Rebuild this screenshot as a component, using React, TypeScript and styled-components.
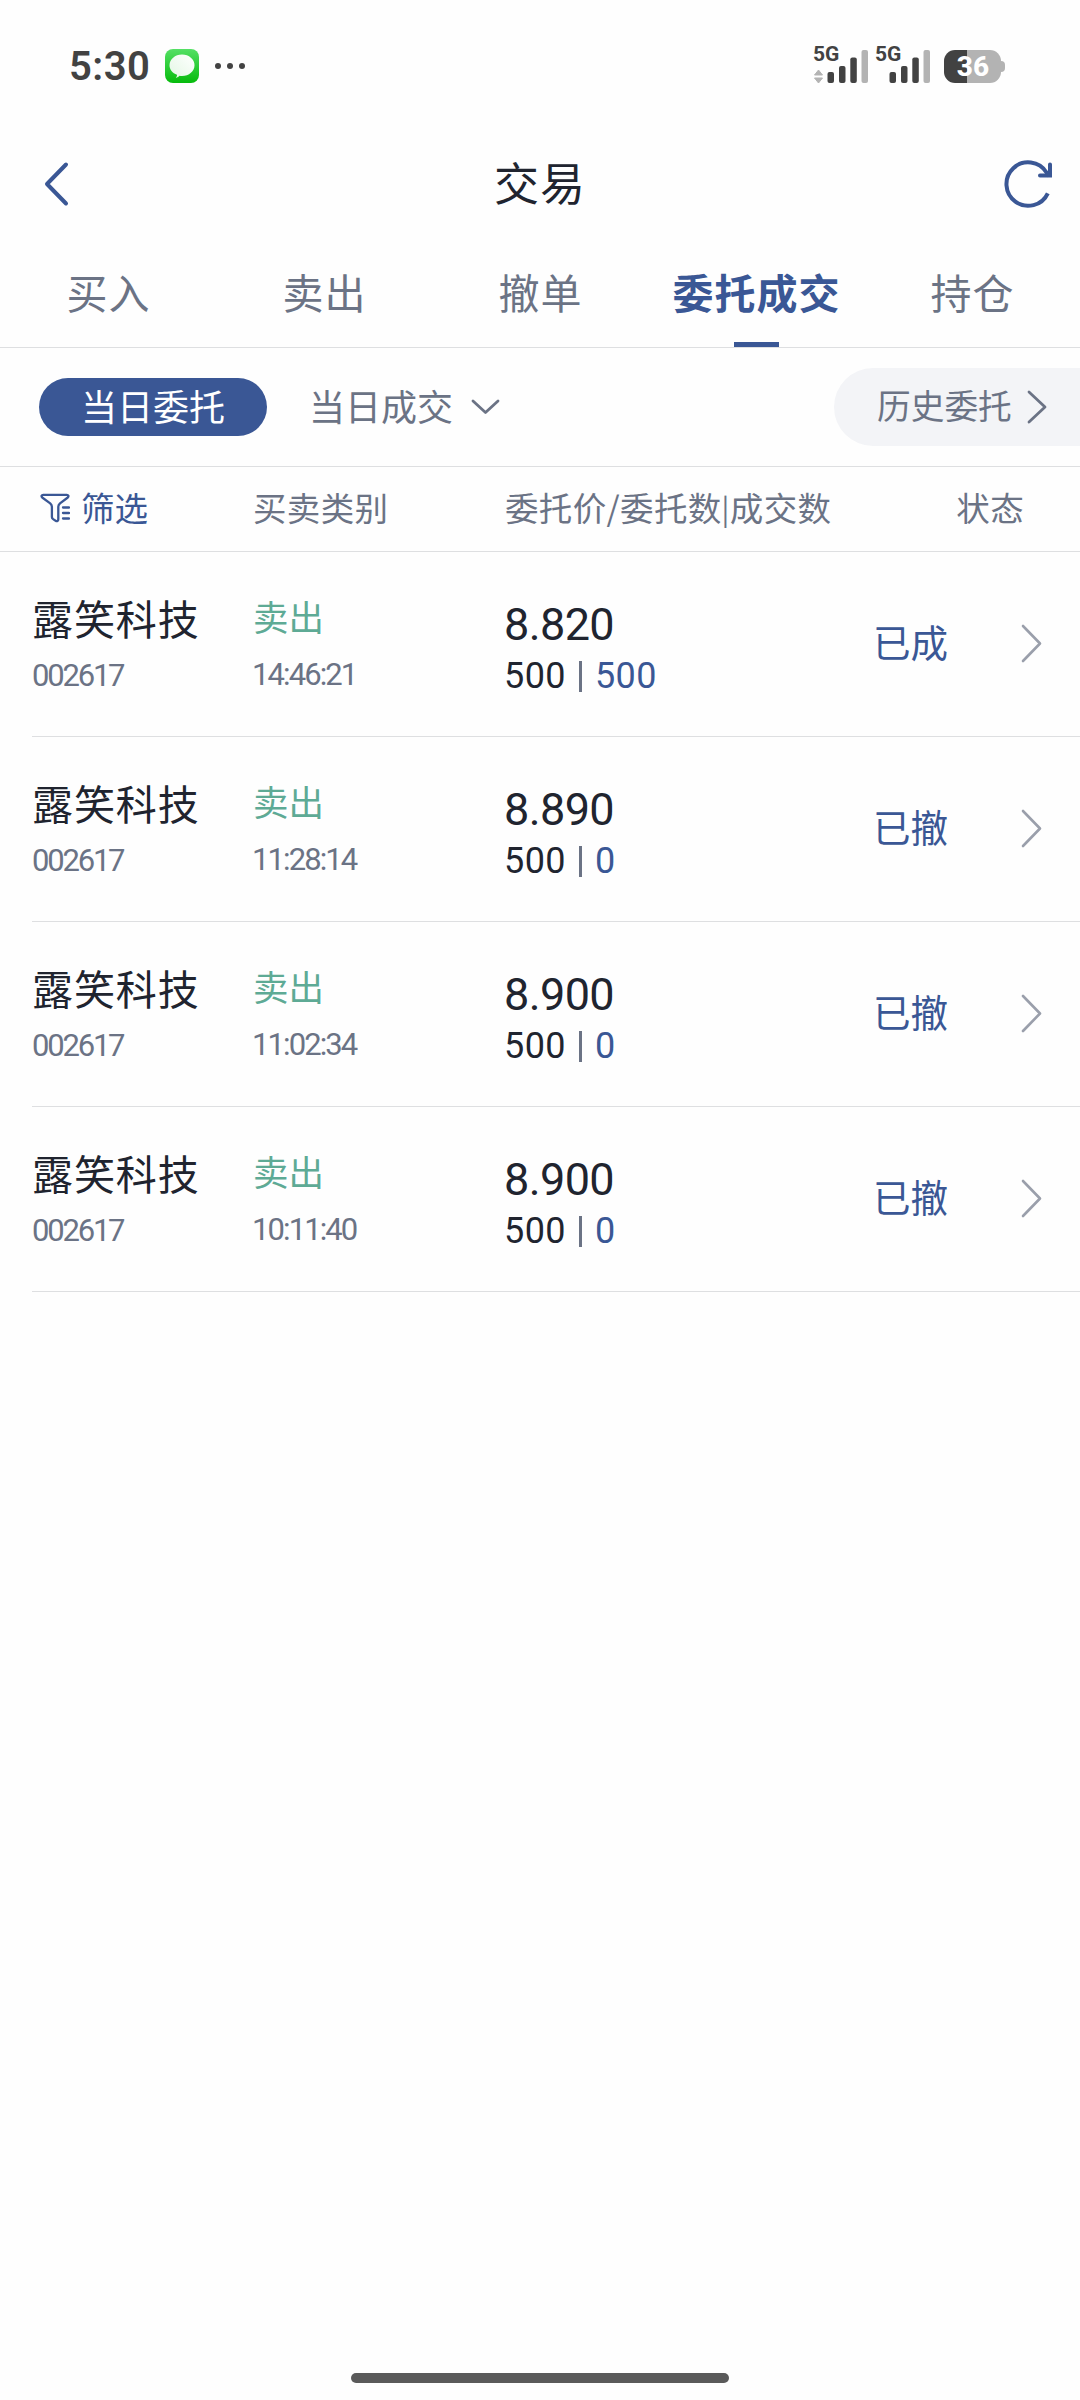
import React from 'react';
import styled, { createGlobalStyle } from 'styled-components';

const c = {
  blue: '#3a5795',
  ink: '#20242f',
  gray: '#6b7385',
  green: '#5eaa95',
  line: '#dedfe1',
  bg: '#fefefe',
  status: '#424242',
  faint: '#b3b3b3',
};
const cjk = `'Noto Sans CJK SC', 'Noto Sans', sans-serif`;
const latin = `Roboto, 'Noto Sans', 'Noto Sans CJK SC', sans-serif`;

const Global = createGlobalStyle`
  * { box-sizing: border-box; }
  body { margin: 0; background: ${c.bg}; font-family: ${cjk}; }
  button { border: 0; padding: 0; margin: 0; background: none; font: inherit; color: inherit; }
  svg { display: block; flex: none; }
`;

const Screen = styled.div`
  width: 1080px;
  height: 2400px;
  display: flex;
  flex-direction: column;
  background: ${c.bg};
  color: ${c.ink};
  overflow: hidden;
`;

const StatusBar = styled.div`
  height: 132px;
  display: flex;
  align-items: center;
  padding: 0 75px 0 69px;
  font-family: ${latin};
  color: ${c.status};
`;
const Clock = styled.span`
  width: 96px;
  padding-top: 1px;
  font-size: 40px;
  line-height: 48px;
  font-weight: 600;
  letter-spacing: 0.5px;
`;
const Dots = styled.div`
  display: flex;
  gap: 6px;
  margin-left: 16px;
  flex: 1;
  i { width: 6px; height: 6px; border-radius: 50%; background: ${c.status}; }
`;
const Signal = styled.div`
  width: 62px;
  height: 38px;
  display: flex;
  flex-direction: column;
  justify-content: space-between;
  position: relative;
`;
const Net = styled.span`
  position: absolute;
  left: -1px;
  top: -4px;
  font-size: 21px;
  line-height: 22px;
  font-weight: 700;
`;
const Battery = styled.div`
  display: flex;
  align-items: center;
  margin-left: 6px;
`;
const Cell = styled.div`
  width: 57px;
  height: 33px;
  border-radius: 11px;
  background: linear-gradient(to right, ${c.status} 23px, ${c.faint} 23px);
  color: #fff;
  font-size: 28px;
  line-height: 34px;
  font-weight: 800;
  text-align: center;
  padding-left: 1px;
`;
const Nub = styled.div`
  width: 4px;
  height: 11px;
  border-radius: 0 4px 4px 0;
  background: ${c.faint};
`;

const Header = styled.header`
  height: 104px;
  display: grid;
  grid-template-columns: 83px 1fr 100px;
  align-items: center;
  padding: 0 26px 0 43px;
  color: ${c.blue};
`;
const Title = styled.h1`
  margin: 0;
  padding-bottom: 4px;
  font-size: 45px;
  line-height: 60px;
  font-weight: 400;
  letter-spacing: 1px;
  color: ${c.ink};
  text-align: center;
`;
const Refresh = styled.button`
  justify-self: end;
`;

const Tabs = styled.nav`
  height: 112px;
  display: flex;
  border-bottom: 1px solid ${c.line};
`;
const Tab = styled.button<{ $on?: boolean }>`
  flex: 1;
  display: flex;
  flex-direction: column;
  align-items: center;
  justify-content: space-between;
  padding-top: 25px;
  font-size: 41px;
  line-height: 60px;
  letter-spacing: 1px;
  text-indent: 1px;
  white-space: nowrap;
  font-weight: ${(p) => (p.$on ? 700 : 400)};
  color: ${(p) => (p.$on ? c.blue : c.gray)};
  &::after {
    content: '';
    width: 45px;
    height: 5px;
    background: ${(p) => (p.$on ? c.blue : 'transparent')};
  }
`;

const ScopeBar = styled.div`
  height: 119px;
  display: flex;
  align-items: center;
  padding-left: 39px;
  color: ${c.gray};
  border-bottom: 1px solid ${c.line};
`;
const Pill = styled.button`
  width: 228px;
  height: 58px;
  border-radius: 29px;
  background: ${c.blue};
  color: #fff;
  font-size: 36px;
  line-height: 54px;
  padding-bottom: 4px;
`;
const Dropdown = styled.button`
  display: flex;
  align-items: center;
  gap: 18px;
  margin-left: 42px;
  font-size: 36px;
  line-height: 54px;
  span { padding-bottom: 4px; }
`;
const History = styled.button`
  margin-left: auto;
  width: 246px;
  height: 78px;
  border-radius: 39px 0 0 39px;
  background: #f3f4f7;
  display: flex;
  align-items: center;
  justify-content: space-between;
  padding: 0 33px 0 43px;
  font-size: 33.7px;
  line-height: 50px;
  span { padding-bottom: 4px; }
`;

const HeadRow = styled.div`
  height: 85px;
  display: grid;
  grid-template-columns: 213px 252px 1fr auto;
  align-items: center;
  padding: 0 56px 4px 40px;
  font-size: 33.5px;
  line-height: 50px;
  letter-spacing: 0.35px;
  color: ${c.gray};
  border-bottom: 1px solid ${c.line};
`;
const Pipe = styled.span`
  font-size: 29px;
  line-height: 1;
  vertical-align: 1px;
`;
const Filter = styled.button`
  display: flex;
  align-items: center;
  gap: 11px;
  color: ${c.blue};
  letter-spacing: 0;
  svg { position: relative; top: 1px; }
`;

const List = styled.ul`
  list-style: none;
  margin: 0;
  padding: 0 0 0 32px;
`;
const Row = styled.li`
  height: 185px;
  display: grid;
  grid-template-columns: 220px 252px 369px 1fr auto;
  border-bottom: 1px solid ${c.line};
  padding-right: 38px;
`;
const Col = styled.div<{ $top: number }>`
  display: flex;
  flex-direction: column;
  align-items: flex-start;
  padding-top: ${(p) => p.$top}px;
  white-space: nowrap;
`;
const Name = styled.span`
  font-size: 41px;
  line-height: 60px;
  letter-spacing: 0.9px;
`;
const Side = styled.span`
  font-size: 35.5px;
  line-height: 56px;
  margin-left: 1px;
  color: ${c.green};
`;
const Small = styled.span<{ $gap: number; $track: number }>`
  margin-top: ${(p) => p.$gap}px;
  font-family: ${latin};
  font-size: 31px;
  line-height: 36px;
  letter-spacing: ${(p) => p.$track}px;
  color: ${c.gray};
`;
const Price = styled.span`
  font-family: ${latin};
  font-size: 45px;
  line-height: 52px;
  letter-spacing: -0.6px;
`;
const Qty = styled.div`
  margin-top: 3px;
  display: flex;
  align-items: center;
  font-family: ${latin};
  font-size: 36px;
  line-height: 44px;
  letter-spacing: 0.4px;
  b { font-weight: 400; color: ${c.blue}; }
  i { width: 3px; height: 31px; margin: 0 13px; background: ${c.gray}; }
`;
const State = styled.span`
  align-self: center;
  padding-bottom: 7px;
  font-size: 37.5px;
  line-height: 54px;
  color: ${c.blue};
`;
const Go = styled.div`
  align-self: center;
  padding-bottom: 1px;
`;

const Spacer = styled.div`
  flex: 1;
`;
const HomeBar = styled.div`
  width: 378px;
  height: 10px;
  margin: 0 auto 17px;
  border-radius: 5px;
  background: #5a5a5a;
`;

const MessageIcon = () => (
  <svg width="34" height="34" viewBox="0 0 34 34">
    <defs>
      <linearGradient id="msg" x1="0" y1="0" x2="0" y2="1">
        <stop offset="0" stopColor="#55e065" />
        <stop offset="1" stopColor="#06bb0c" />
      </linearGradient>
      <linearGradient id="bubble" x1="1" y1="0" x2="0" y2="1">
        <stop offset="0" stopColor="#fff" />
        <stop offset="1" stopColor="#e3f7e4" />
      </linearGradient>
    </defs>
    <rect width="34" height="34" rx="8" fill="url(#msg)" />
    <path
      d="M17 5.500c7 0 12.500 4.800 12.500 10.700S24 27 17 27c-.9 0-1.700-.1-2.500-.2-.9.900-2 1.700-3.600 2.100.9-1.100 1.200-2.100 1.100-3.100C7.500 24 4.500 20.400 4.500 16.200 4.500 10.300 10 5.500 17 5.500Z"
      fill="url(#bubble)"
    />
  </svg>
);

const Bars = ({ arrows = false }: { arrows?: boolean }) => (
  <svg width="62" height="38" viewBox="0 0 62 38">
    {arrows && (
      <g fill={c.faint} stroke={c.faint} strokeWidth="1" strokeLinejoin="round">
        <path d="M4.500 23 8.500 28h-8Z" />
        <path d="M.5 31h8L4.500 36Z" />
      </g>
    )}
    <g fill={c.status}>
      <rect x="13.500" y="25" width="6.500" height="11" rx="2" />
      <rect x="25" y="19" width="6.500" height="17" rx="2" />
      <rect x="36.300" y="10.500" width="6.500" height="25.500" rx="2" />
    </g>
    <rect x="47.500" y="3" width="6.500" height="33" rx="2" fill={c.faint} />
  </svg>
);

const BackIcon = () => (
  <svg width="26" height="46" viewBox="0 0 26 46" fill="none" stroke={c.blue} strokeWidth="4" strokeLinecap="round" strokeLinejoin="round">
    <path d="M23 3.500 4 23l19 19.500" />
  </svg>
);

const RefreshIcon = () => (
  <svg width="52" height="52" viewBox="0 0 52 52" fill="none" stroke={c.blue} strokeWidth="4">
    <path d="M45.800 35.300A21.700 21.700 0 1 1 44.500 14.500L47 18" strokeLinecap="butt" />
    <path d="M48 6.500V17.500H38" strokeLinecap="round" strokeLinejoin="miter" />
  </svg>
);

const FunnelIcon = () => (
  <svg width="30" height="30" viewBox="0 0 30 30" fill="none" stroke={c.blue} strokeWidth="2.300" strokeLinecap="round" strokeLinejoin="round">
    <path d="M3.200 1.800h23.600c1.600 0 2.200 1.600 1 2.700L20 10.400c-1 .9-1.700 1.900-1.700 3.300v12.500c0 1.800-1.300 2.400-2.700 1.500l-2.500-1.600c-.8-.5-1.200-1.100-1.200-2V13.700c0-1.400-.7-2.400-1.700-3.300L2.200 4.500c-1.200-1.100-.6-2.700 1-2.700Z" />
    <path d="M23 14.500h6M23 20h6M23 25.500h6" />
  </svg>
);

const Chevron = ({ w, h, color, stroke }: { w: number; h: number; color: string; stroke: number }) => (
  <svg width={w} height={h} viewBox={`0 0 ${w} ${h}`} fill="none" stroke={color} strokeWidth={stroke} strokeLinecap="round" strokeLinejoin="round">
    <path d={`M2 2L${w - 2} ${h / 2}L2 ${h - 2}`} />
  </svg>
);

const tabs = ['买入', '卖出', '撤单', '委托成交', '持仓'];
const orders = [
  { time: '14:46:21', price: '8.820', filled: '500', state: '已成' },
  { time: '11:28:14', price: '8.890', filled: '0', state: '已撤' },
  { time: '11:02:34', price: '8.900', filled: '0', state: '已撤' },
  { time: '10:11:40', price: '8.900', filled: '0', state: '已撤' },
];

export default function App() {
  return (
    <Screen>
      <Global />
      <StatusBar>
        <Clock>5:30</Clock>
        <MessageIcon />
        <Dots><i /><i /><i /></Dots>
        <Signal><Bars arrows /><Net>5G</Net></Signal>
        <Signal><Bars /><Net>5G</Net></Signal>
        <Battery><Cell>36</Cell><Nub /></Battery>
      </StatusBar>
      <Header>
        <button aria-label="返回"><BackIcon /></button>
        <Title>交易</Title>
        <Refresh aria-label="刷新"><RefreshIcon /></Refresh>
      </Header>
      <Tabs>
        {tabs.map((t) => <Tab key={t} $on={t === '委托成交'}>{t}</Tab>)}
      </Tabs>
      <ScopeBar>
        <Pill>当日委托</Pill>
        <Dropdown>
          <span>当日成交</span>
          <svg width="29" height="16" viewBox="0 0 29 16" fill="none" stroke={c.gray} strokeWidth="2.800" strokeLinecap="round" strokeLinejoin="round">
            <path d="M2 2l12.500 11.500L27 2" />
          </svg>
        </Dropdown>
        <History>
          <span>历史委托</span>
          <Chevron w={20} h={34} color={c.gray} stroke={2.8} />
        </History>
      </ScopeBar>
      <HeadRow>
        <Filter><FunnelIcon />筛选</Filter>
        <span>买卖类别</span>
        <span>委托价/委托数<Pipe>|</Pipe>成交数</span>
        <span>状态</span>
      </HeadRow>
      <List>
        {orders.map((o) => (
          <Row key={o.time}>
            <Col $top={35}>
              <Name>露笑科技</Name>
              <Small $gap={11} $track={-2.2}>002617</Small>
            </Col>
            <Col $top={36}>
              <Side>卖出</Side>
              <Small $gap={13} $track={-1.9}>{o.time}</Small>
            </Col>
            <Col $top={47}>
              <Price>{o.price}</Price>
              <Qty>500<i /><b>{o.filled}</b></Qty>
            </Col>
            <State>{o.state}</State>
            <Go><Chevron w={21} h={39} color="#9a9fab" stroke={2.6} /></Go>
          </Row>
        ))}
      </List>
      <Spacer />
      <HomeBar />
    </Screen>
  );
}
